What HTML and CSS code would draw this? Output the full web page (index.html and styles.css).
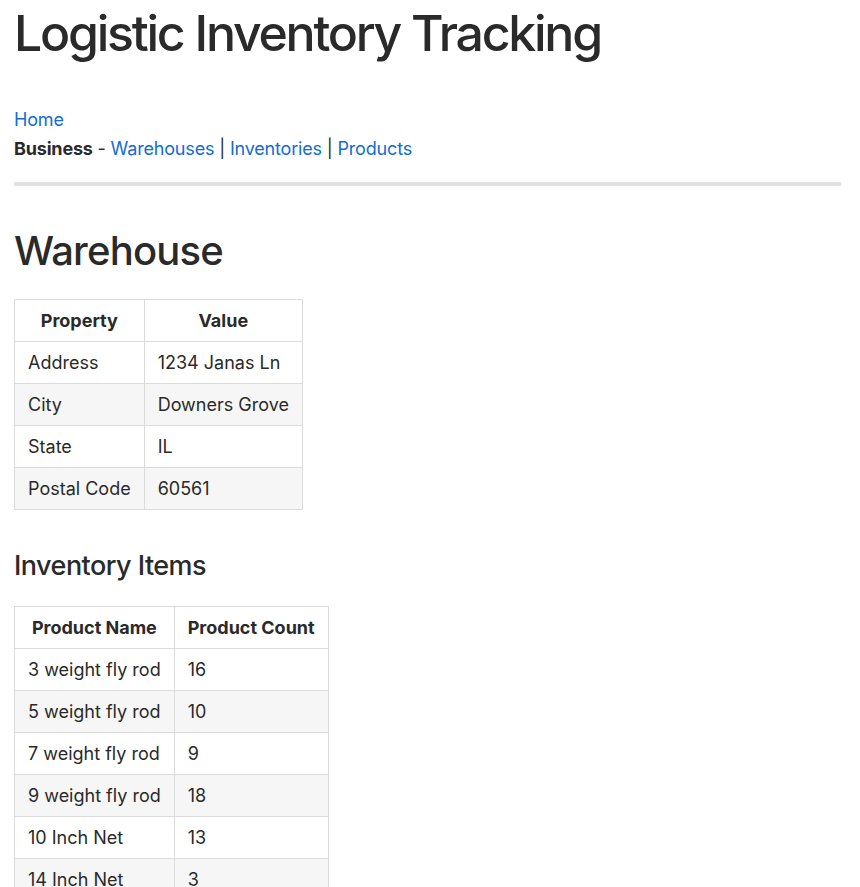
FILE: index.html
```html
<!DOCTYPE html>
<html lang="en">
<head>
<meta charset="utf-8">
<title>Logistic Inventory Tracking</title>
<link rel="stylesheet" href="styles.css">
</head>
<body>
<header class="site-header">
  <h1 class="site-title">Logistic Inventory Tracking</h1>
  <nav class="site-nav">
    <div class="nav-line"><a href="#">Home</a></div>
    <div class="nav-line"><strong>Business</strong> - <a href="#">Warehouses</a> | <a href="#">Inventories</a> | <a href="#">Products</a></div>
  </nav>
  <hr class="divider">
</header>
<main class="content">
  <h2 class="page-title">Warehouse</h2>
  <table class="data-table">
    <thead>
      <tr><th>Property</th><th>Value</th></tr>
    </thead>
    <tbody>
      <tr><td>Address</td><td>1234 Janas Ln</td></tr>
      <tr><td>City</td><td>Downers Grove</td></tr>
      <tr><td>State</td><td>IL</td></tr>
      <tr><td>Postal Code</td><td>60561</td></tr>
    </tbody>
  </table>
  <h3 class="section-title">Inventory Items</h3>
  <table class="data-table">
    <thead>
      <tr><th>Product Name</th><th>Product Count</th></tr>
    </thead>
    <tbody>
      <tr><td>3 weight fly rod</td><td>16</td></tr>
      <tr><td>5 weight fly rod</td><td>10</td></tr>
      <tr><td>7 weight fly rod</td><td>9</td></tr>
      <tr><td>9 weight fly rod</td><td>18</td></tr>
      <tr><td>10 Inch Net</td><td>13</td></tr>
      <tr><td>14 Inch Net</td><td>3</td></tr>
      <tr><td>Fly Box</td><td>7</td></tr>
    </tbody>
  </table>
</main>
</body>
</html>
```
FILE: styles.css
```css
html, body {
  background: #ffffff;
}
body {
  margin: 0 19px 0 14px;
  padding-top: 1px;
  font-family: Inter, "Liberation Sans", sans-serif;
  font-size: 18px;
  color: #2a2a2a;
}
a {
  color: #0f6dd6;
  text-decoration: none;
}
.site-title {
  margin: 0 0 39px 0;
  font-size: 50px;
  font-weight: 500;
  line-height: 65px;
  letter-spacing: -0.045em;
}
.nav-line {
  line-height: 29px;
  letter-spacing: -0.01em;
}
.nav-line strong {
  font-weight: 700;
}
.divider {
  margin: 19px 0 0 0;
  border: 0;
  height: 4px;
  background: #e2e2e2;
}
.page-title {
  margin: 40px 0 24px 0;
  font-size: 40px;
  font-weight: 500;
  line-height: 49px;
  letter-spacing: -0.02em;
}
.section-title {
  margin: 39px 0 23px 0;
  font-size: 27px;
  font-weight: 500;
  line-height: 34px;
  letter-spacing: -0.02em;
}
.data-table {
  border-collapse: collapse;
}
.data-table th,
.data-table td {
  border: 1px solid #dbdbdb;
  padding: 10px 13px;
  line-height: 21px;
  text-align: left;
}
.data-table th {
  text-align: center;
  font-weight: 700;
}
.data-table tbody tr:nth-child(even) {
  background: #f6f6f6;
}
```
